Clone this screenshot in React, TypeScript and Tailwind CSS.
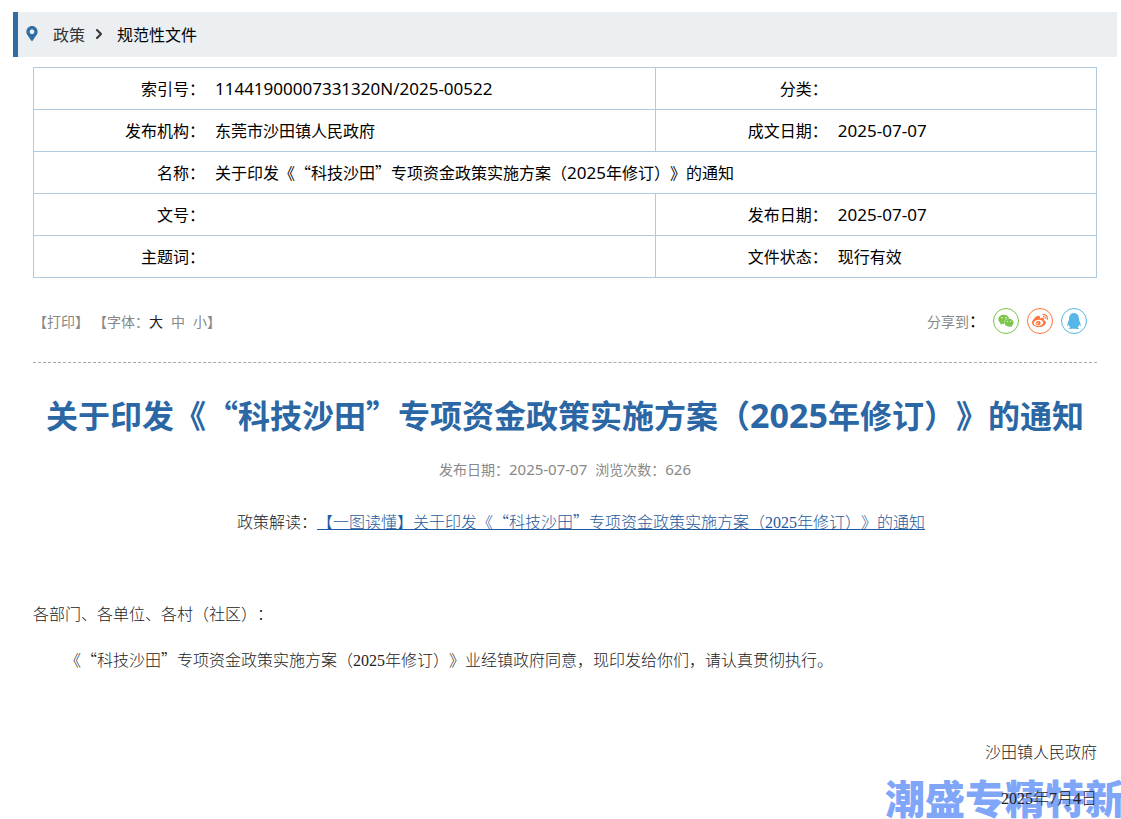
import type { ReactNode } from 'react';
import { ChevronRight } from 'lucide-react';
import { FaMapMarkerAlt, FaQq, FaWeibo, FaWeixin } from 'react-icons/fa';

type Meta = { label: string; value?: ReactNode; wide?: boolean };

const Num = ({ children }: { children: ReactNode }) => (
  <span className="font-['Noto_Sans',sans-serif] text-[17px] leading-none">{children}</span>
);

const SerifNum = ({ children }: { children: ReactNode }) => (
  <span className="font-['Liberation_Serif',serif] leading-none">{children}</span>
);

const rows: Meta[][] = [
  [{ label: '索引号：', value: <Num>11441900007331320N/2025-00522</Num> }, { label: '分类：' }],
  [{ label: '发布机构：', value: '东莞市沙田镇人民政府' }, { label: '成文日期：', value: <Num>2025-07-07</Num> }],
  [
    {
      label: '名称：',
      value: <>关于印发《“科技沙田”专项资金政策实施方案（<Num>2025</Num>年修订）》的通知</>,
      wide: true,
    },
  ],
  [{ label: '文号：' }, { label: '发布日期：', value: <Num>2025-07-07</Num> }],
  [{ label: '主题词：' }, { label: '文件状态：', value: '现行有效' }],
];

const shares = [
  { label: '微信', icon: FaWeixin, style: 'border-[#7bc549] text-[#7bc549]' },
  { label: '微博', icon: FaWeibo, style: 'border-[#ff763b] text-[#ff763b]' },
  { label: 'QQ', icon: FaQq, style: 'border-[#56b6e7] text-[#56b6e7]' },
];

const Breadcrumb = () => (
  <nav className="flex h-[45px] items-center border-l-[5px] border-[#2f6ea5] bg-[#ebeff2] pb-0.5 pl-2">
    <FaMapMarkerAlt className="h-[15px] w-3 text-[#2f6ea5]" />
    <a href="#" className="ml-[15px] text-[#333]">政策</a>
    <ChevronRight className="mx-1.5 h-4 w-4 text-[#333]" strokeWidth={3} />
    <a href="#" className="ml-1 text-black">规范性文件</a>
  </nav>
);

const MetaTable = () => (
  <table className="w-full table-fixed border-collapse">
    <colgroup>
      <col className="w-[16.6%]" />
      <col className="w-[41.9%]" />
      <col className="w-[16.7%]" />
      <col />
    </colgroup>
    <tbody>
      {rows.map((row) => (
        <tr key={row[0].label} className="h-[42px] border border-[#b0cbe0]">
          {row.map((cell) => [
            <th key={cell.label} scope="row" className="border-l border-[#b0cbe0] px-[5px] pt-0 pb-0.5 text-right font-normal">
              {cell.label}
            </th>,
            <td key={`${cell.label}-value`} colSpan={cell.wide ? 3 : 1} className="px-[5px] pt-0 pb-0.5">
              {cell.value}
            </td>,
          ])}
        </tr>
      ))}
    </tbody>
  </table>
);

const Toolbar = () => (
  <div className="flex h-[85px] items-center justify-between border-b border-dashed border-[#aaa] pt-0.5 text-sm text-[#888]">
    <div className="flex items-center">
      <button type="button">【打印】</button>
      <span className="ml-1">【字体：</span>
      <button type="button" className="text-[#222]">大</button>
      <button type="button" className="ml-2">中</button>
      <button type="button" className="ml-2">小</button>
      <span>】</span>
    </div>
    <div className="flex items-center gap-2 pr-2.5">
      <span>分享到<span className="text-base leading-none text-black">：</span></span>
      {shares.map((share) => {
        const Icon = share.icon;
        return (
          <a
            key={share.label}
            href="#"
            aria-label={share.label}
            className={`flex h-[26px] w-[26px] items-center justify-center rounded-full border ${share.style}`}
          >
            <Icon className="h-4 w-4" />
          </a>
        );
      })}
    </div>
  </div>
);

const App = () => {
  return (
    <div className="min-h-screen overflow-hidden bg-white pt-3 pr-1 pl-[13px] font-['Noto_Sans_CJK_SC',sans-serif] text-base leading-6 text-black [text-spacing-trim:space-all]">
      <Breadcrumb />

      <main className="mt-2.5 pr-5 pl-5">
        <MetaTable />
        <Toolbar />

        <h1 className="mt-[26px] text-center text-[32px] leading-[50px] font-bold text-[#2b66a5]">
          关于印发《“科技沙田”专项资金政策实施方案（
          <span className="font-['Noto_Sans',sans-serif] text-[34px] leading-none">2025</span>
          年修订）》的通知
        </h1>

        <p className="mt-[18px] text-center text-sm leading-6 text-[#888]">
          发布日期：<span className="mr-2 font-['Noto_Sans',sans-serif] text-[15px] leading-none">2025-07-07</span>
          浏览次数：<span className="font-['Noto_Sans',sans-serif] text-[15px] leading-none">626</span>
        </p>

        {/* Notice text */}
        <article className="mt-[17px] leading-[46px] font-light text-[#222]">
          <p className="text-center indent-8">
            政策解读：
            <a href="#" className="text-[#1f5a9c] underline">
              【一图读懂】关于印发《“科技沙田”专项资金政策实施方案（<SerifNum>2025</SerifNum>年修订）》的通知
            </a>
          </p>
          <p className="mt-[46px]">各部门、各单位、各村（社区）：</p>
          <p className="indent-8">
            《“科技沙田”专项资金政策实施方案（<SerifNum>2025</SerifNum>
            年修订）》业经镇政府同意，现印发给你们，请认真贯彻执行。
          </p>
          <p className="mt-[46px] text-right">沙田镇人民政府</p>
          <div className="relative text-right">
            <span
              aria-hidden="true"
              className="absolute top-0 -right-7 text-[40px] leading-[46px] font-black whitespace-nowrap text-[#7fa6f8]"
            >
              潮盛专精特新
            </span>
            <p className="relative">
              <SerifNum>2025</SerifNum>年<SerifNum>7</SerifNum>月<SerifNum>4</SerifNum>日
            </p>
          </div>
        </article>
      </main>
    </div>
  );
};

export default App;
